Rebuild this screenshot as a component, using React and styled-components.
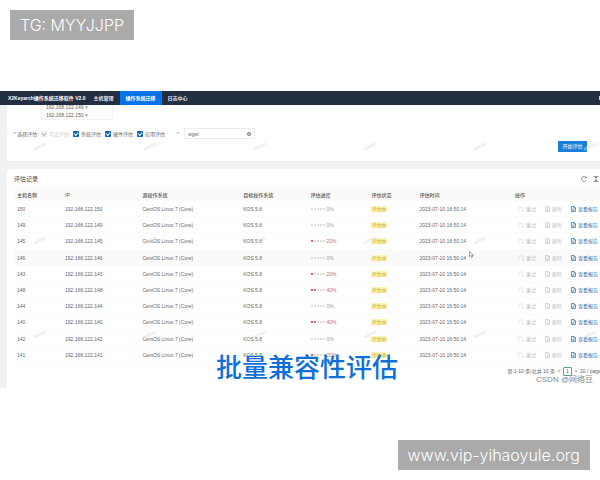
import React from "react";
import styled, { createGlobalStyle } from "styled-components";

const hosts = [
  { id: "150", progress: 0 },
  { id: "149", progress: 0 },
  { id: "145", progress: 20 },
  { id: "146", progress: 0, active: true },
  { id: "143", progress: 20 },
  { id: "148", progress: 40 },
  { id: "144", progress: 0 },
  { id: "140", progress: 40 },
  { id: "142", progress: 0 },
  { id: "141", progress: 20 },
];

const columns = [
  { title: "主机名称", width: "8.2%" },
  { title: "IP", width: "13.2%" },
  { title: "源操作系统", width: "17.2%" },
  { title: "目标操作系统", width: "11.5%" },
  { title: "评估进度", width: "10.4%" },
  { title: "评估状态", width: "8.2%" },
  { title: "评估时间", width: "16.3%" },
  { title: "操作", width: "15%" },
];

const checks = [
  { label: "可迁评估", disabled: true },
  { label: "系统评估" },
  { label: "硬件评估" },
  { label: "应用评估" },
];

const steps = [20, 40, 60, 80, 100];
const marks = Array.from({ length: 18 }, (_, i) => i);

const RedoIcon = () => (
  <svg width="6" height="6" viewBox="0 0 12 12" fill="none" stroke="currentColor">
    <path d="M3 10.5A5 5 0 1 1 9 10.5M9 10.5V8M9 10.5h2.5" />
  </svg>
);

const FileIcon = () => (
  <svg width="5" height="6" viewBox="0 0 10 12" fill="none" stroke="currentColor" strokeWidth="1.4">
    <path d="M1 1h5l3 3v7H1zM6 1v3h3M3 6.5h3M3 8.5h4" />
  </svg>
);

const ReloadIcon = () => (
  <svg width="6" height="6" viewBox="0 0 12 12" fill="none" stroke="currentColor" strokeWidth="1.4">
    <path d="M10.5 8A5 5 0 1 1 10 3M10.5 1v3h-3" />
  </svg>
);

const HeightIcon = () => (
  <svg width="6" height="6" viewBox="0 0 12 12" fill="none" stroke="currentColor" strokeWidth="1.4">
    <path d="M1 1h10M1 11h10M6 2v8M4 4l2-2 2 2M4 8l2 2 2-2" />
  </svg>
);

const ClearIcon = () => (
  <svg width="4" height="4" viewBox="0 0 12 12" fill="none" stroke="currentColor" strokeWidth="2">
    <path d="M6 1a5 5 0 1 0 0 10A5 5 0 1 0 6 1M4 4l4 4M8 4l-4 4" />
  </svg>
);

const CursorIcon = () => (
  <svg width="5" height="7" viewBox="0 0 10 14" fill="#fff" stroke="#444">
    <path d="M1 1v10l2.5-2 1.5 4 2-1-1.5-3.5H9z" />
  </svg>
);

function App() {
  return (
    <Page>
      <GlobalStyle />
      <Badge>TG: MYYJJPP</Badge>
      <Frame>
        <Navbar>
          <Brand>X2Keyarch操作系统迁移软件 V2.0</Brand>
          <NavLink href="#hosts">主机管理</NavLink>
          <NavLink href="#migrate" $active>
            操作系统迁移
          </NavLink>
          <NavLink href="#logs">日志中心</NavLink>
          <Avatar />
        </Navbar>
        <Content>
          <FormCard>
            <HostList>
              <li>192.168.122.149 ×</li>
              <li>192.168.122.150 ×</li>
            </HostList>
            <FormRow>
              <FormLabel>
                <i>*</i> 选择评估:
              </FormLabel>
              {checks.map((c) => (
                <CheckLabel key={c.label} $disabled={c.disabled}>
                  <input type="checkbox" defaultChecked disabled={c.disabled} />
                  {c.label}
                </CheckLabel>
              ))}
              <Required>*</Required>
              <SearchBox>
                <input type="text" defaultValue="wget" aria-label="应用" />
                <ClearIcon />
              </SearchBox>
            </FormRow>
            <StartButton type="button">开始评估</StartButton>
          </FormCard>
          <RecordCard>
            <RecordHead>
              <h2>评估记录</h2>
              <IconButton type="button" aria-label="刷新">
                <ReloadIcon />
              </IconButton>
              <IconButton type="button" aria-label="密度">
                <HeightIcon />
              </IconButton>
            </RecordHead>
            <Table>
              <colgroup>
                {columns.map((c) => (
                  <Col key={c.title} $width={c.width} />
                ))}
              </colgroup>
              <thead>
                <tr>
                  {columns.map((c) => (
                    <th key={c.title}>{c.title}</th>
                  ))}
                </tr>
              </thead>
              <tbody>
                {hosts.map((h) => (
                  <Row key={h.id} $active={h.active}>
                    <td>{h.id}</td>
                    <td>192.168.122.{h.id}</td>
                    <td>CentOS Linux 7 (Core)</td>
                    <td>KOS 5.8</td>
                    <td>
                      <Progress $busy={h.progress > 0}>
                        {steps.map((s) => (
                          <Step key={s} $done={h.progress >= s} />
                        ))}
                        <span>{h.progress}%</span>
                      </Progress>
                    </td>
                    <td>
                      <Status>评估中</Status>
                    </td>
                    <td>2023-07-10 16:50:14</td>
                    <td>
                      <Actions>
                        <Action type="button" disabled>
                          <RedoIcon />
                          重试
                        </Action>
                        <Action type="button" disabled>
                          <FileIcon />
                          删除
                        </Action>
                        <Action type="button">
                          <FileIcon />
                          查看报告
                        </Action>
                      </Actions>
                    </td>
                  </Row>
                ))}
              </tbody>
            </Table>
            <Pagination>
              <span>第 1-10 条/总共 10 条</span>
              <PageButton type="button">&lt;</PageButton>
              <PageButton type="button" $current>
                1
              </PageButton>
              <PageButton type="button">&gt;</PageButton>
              <PageSize aria-label="每页条数">
                <option>20 / page</option>
              </PageSize>
            </Pagination>
          </RecordCard>
        </Content>
        <Watermarks aria-hidden="true">
          {marks.map((m) => (
            <span key={m}>admin</span>
          ))}
        </Watermarks>
        <Pointer>
          <CursorIcon />
        </Pointer>
        <Caption>批量兼容性评估</Caption>
        <Credit>CSDN @网络豆</Credit>
      </Frame>
      <Badge $end>www.vip-yihaoyule.org</Badge>
    </Page>
  );
}

const GlobalStyle = createGlobalStyle`
  * {
    box-sizing: border-box;
  }
  body {
    margin: 0;
    background: #fff;
  }
  button, input, select {
    font: inherit;
    color: inherit;
    margin: 0;
    padding: 0;
    border: none;
    background: none;
  }
`;

const Page = styled.div`
  display: flex;
  flex-direction: column;
  min-height: 100vh;
  padding: 10px 0;
`;

const Badge = styled.div`
  align-self: ${(p) => (p.$end ? "flex-end" : "flex-start")};
  margin: ${(p) => (p.$end ? "auto 10px 0" : "0 10px")};
  padding: 0 10px;
  background: #aaa;
  color: #fff;
  font: 300 16px/30px Inter, "Noto Sans", sans-serif;
`;

const Frame = styled.main`
  position: relative;
  margin-top: 51px;
  overflow: hidden;
  background: #eff1f3;
  color: #666;
  font: 5px/8px "Liberation Sans", "Noto Sans CJK SC", sans-serif;
`;

const Navbar = styled.nav`
  display: flex;
  align-items: center;
  height: 14px;
  padding-left: 8px;
  background: #222e42;
  color: #fff;
  font-weight: 700;
`;

const Brand = styled.span`
  margin-right: 2px;
  white-space: nowrap;
`;

const NavLink = styled.a`
  padding: 0 6px;
  line-height: 14px;
  color: ${(p) => (p.$active ? "#fff" : "#e4e8ee")};
  background: ${(p) => (p.$active ? "#0673ea" : "none")};
  text-decoration: none;
`;

const Avatar = styled.span`
  width: 1px;
  height: 4px;
  margin-left: auto;
  background: #c8cdd5;
`;

const Content = styled.div`
  display: flex;
  flex-direction: column;
  gap: 8px;
  padding-left: 7px;
`;

const FormCard = styled.form`
  display: flex;
  flex-direction: column;
  padding: 0 13px 9px 7px;
  background: #fff;
`;

const HostList = styled.ul`
  display: flex;
  flex-direction: column;
  justify-content: flex-end;
  width: 72px;
  height: 15px;
  margin: 0 0 8px 27px;
  padding: 0 4px;
  overflow: hidden;
  list-style: none;
  background: #fcfcfc;
  border: 1px solid #f3f3f3;
  border-top: none;
`;

const FormRow = styled.div`
  display: flex;
  align-items: center;
  height: 11px;
`;

const FormLabel = styled.span`
  width: 27px;
  white-space: nowrap;
  i {
    color: #d66;
    font-style: normal;
  }
`;

const CheckLabel = styled.label`
  display: flex;
  align-items: center;
  gap: 2px;
  margin-right: 4px;
  color: ${(p) => (p.$disabled ? "#ccc" : "#666")};
  input {
    appearance: none;
    width: 6px;
    height: 6px;
    border-radius: 1px;
    background: ${(p) => (p.$disabled ? "#eee" : "#1463ae")};
    display: grid;
    place-items: center;
  }
  input:checked::after {
    content: "";
    width: 3px;
    height: 2px;
    border: solid ${(p) => (p.$disabled ? "#bbb" : "#fff")};
    border-width: 0 0 1px 1px;
    transform: rotate(-45deg);
  }
`;

const Required = styled.span`
  margin: 0 5px 0 8px;
  color: #a77;
`;

const SearchBox = styled.div`
  display: flex;
  align-items: center;
  width: 71px;
  height: 11px;
  padding: 0 3px;
  border: 1px solid #ececec;
  input {
    flex: 1;
    min-width: 0;
    outline: none;
  }
`;

const StartButton = styled.button`
  align-self: flex-end;
  width: 29px;
  height: 11px;
  margin-top: 2px;
  background: #1a7fd8;
  color: #fff;
  line-height: 11px;
`;

const RecordCard = styled.section`
  padding: 0 0 10px 7px;
  background: #fff;
  border-top-left-radius: 3px;
`;

const RecordHead = styled.header`
  display: flex;
  align-items: center;
  gap: 6px;
  height: 19px;
  padding-right: 1px;
  h2 {
    flex: 1;
    margin: 0;
    font-size: 6px;
    font-weight: 400;
    color: #444;
  }
`;

const IconButton = styled.button`
  display: flex;
  color: #666;
`;

const Table = styled.table`
  width: 100%;
  height: 175px;
  table-layout: fixed;
  border-collapse: collapse;
  th,
  td {
    padding: 0 0 0 3px;
    text-align: left;
    white-space: nowrap;
  }
  th {
    height: 13px;
    background: #fafafa;
    color: #555;
    font-weight: 500;
  }
`;

const Col = styled.col`
  width: ${(p) => p.$width};
`;

const Row = styled.tr`
  background: ${(p) => (p.$active ? "#fafafa" : "#fff")};
  box-shadow: inset 0 -1px #fafafa;
`;

const Progress = styled.div`
  display: flex;
  align-items: center;
  color: ${(p) => (p.$busy ? "#c66a75" : "#999")};
  span {
    margin-left: 1px;
  }
`;

const Step = styled.i`
  width: 2px;
  height: 2px;
  margin-right: 1px;
  background: ${(p) => (p.$done ? "#cf6573" : "#ddd")};
`;

const Status = styled.span`
  background: #fdf6b8;
  color: #cbae1c;
`;

const Actions = styled.div`
  display: flex;
  align-items: center;
  gap: 9px;
  padding-left: 3px;
`;

const Action = styled.button`
  display: flex;
  align-items: center;
  gap: 2px;
  color: ${(p) => (p.disabled ? "#c4c4c4" : "#1b6fae")};
  svg {
    flex: none;
  }
`;

const Pagination = styled.div`
  display: flex;
  align-items: center;
  justify-content: flex-end;
  gap: 2px;
  height: 14px;
  margin-top: 1px;
  white-space: nowrap;
`;

const PageButton = styled.button`
  width: ${(p) => (p.$current ? "9px" : "4px")};
  height: 9px;
  line-height: 7px;
  border: ${(p) => (p.$current ? "1px solid #5f9a9a" : "none")};
  border-radius: 1px;
  color: ${(p) => (p.$current ? "#277a7a" : "#555")};
`;

const PageSize = styled.select`
  appearance: none;
  width: 20px;
  overflow: hidden;
`;

const Watermarks = styled.div`
  position: absolute;
  inset: 8px -60px auto -15px;
  display: grid;
  grid-template-columns: repeat(6, 110px);
  grid-auto-rows: 94px;
  place-items: center;
  color: #dedede;
  pointer-events: none;
  span {
    transform: rotate(-22deg);
  }
`;

const Pointer = styled.div`
  position: absolute;
  left: 469px;
  top: 160px;
  display: flex;
`;

const Caption = styled.div`
  position: absolute;
  left: 0;
  right: 0;
  bottom: 7px;
  padding-left: 14px;
  text-align: center;
  color: #0f6fd6;
  font: 500 26px/30px "Noto Sans CJK SC", sans-serif;
`;

const Credit = styled.div`
  position: absolute;
  right: 7px;
  bottom: 3px;
  color: #888;
  font-size: 8px;
  line-height: 10px;
`;

export default App;
